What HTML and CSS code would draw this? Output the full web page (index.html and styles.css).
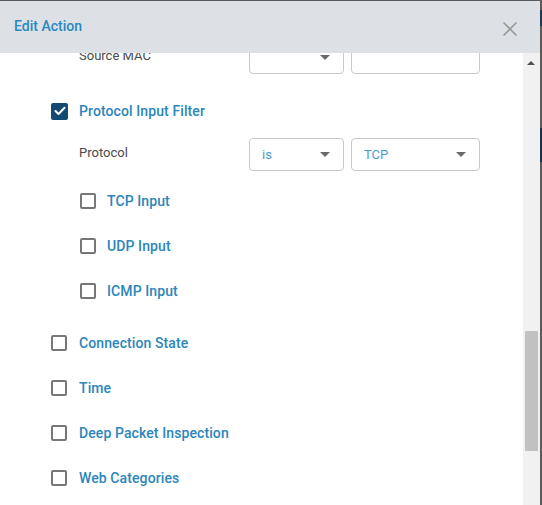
FILE: index.html
```html
<!DOCTYPE html>
<html>
<head>
<meta charset="utf-8">
<link rel="stylesheet" href="styles.css">
</head>
<body>
<div class="modal">
  <div class="modal-header">
    <span class="title">Edit Action</span>
    <svg class="close" width="16" height="16" viewBox="0 0 16 16"><path d="M1.5 1.5 L14.5 14.5 M14.5 1.5 L1.5 14.5" stroke="#9a9a9a" stroke-width="1.6" fill="none"/></svg>
  </div>
  <div class="modal-body">
    <div class="content">
      <div class="inner">
        <div class="field-row">
          <span class="field-label">Source MAC</span>
          <div class="select small"><span class="value"></span><span class="caret"></span></div>
          <div class="input wide"></div>
        </div>
        <div class="check-row first">
          <span class="box checked"><svg width="12" height="10" viewBox="0 0 12 10"><path d="M1.5 5 L4.5 8 L10.5 1.8" stroke="#fff" stroke-width="2" fill="none" stroke-linecap="round" stroke-linejoin="round"/></svg></span>
          <span class="check-label">Protocol Input Filter</span>
        </div>
        <div class="field-row proto">
          <span class="field-label">Protocol</span>
          <div class="select small"><span class="value">is</span><span class="caret"></span></div>
          <div class="select wide"><span class="value">TCP</span><span class="caret"></span></div>
        </div>
        <div class="sub-group">
          <div class="check-row"><span class="box"></span><span class="check-label">TCP Input</span></div>
          <div class="check-row"><span class="box"></span><span class="check-label">UDP Input</span></div>
          <div class="check-row"><span class="box"></span><span class="check-label">ICMP Input</span></div>
        </div>
        <div class="main-group">
          <div class="check-row"><span class="box"></span><span class="check-label">Connection State</span></div>
          <div class="check-row"><span class="box"></span><span class="check-label">Time</span></div>
          <div class="check-row"><span class="box"></span><span class="check-label">Deep Packet Inspection</span></div>
          <div class="check-row"><span class="box"></span><span class="check-label">Web Categories</span></div>
        </div>
      </div>
    </div>
    <div class="scrollbar">
      <span class="arrow-up"></span>
      <span class="thumb"></span>
    </div>
  </div>
</div>
</body>
</html>
```
FILE: styles.css
```css
html, body {
  margin: 0;
  padding: 0;
}
body {
  width: 542px;
  height: 505px;
  overflow: hidden;
  background: linear-gradient(to bottom, #5a5a5a 0px, #5a5a5a 10px, #1d3a55 10px, #1d3a55 26px, #5a5a5a 26px, #5a5a5a 128px, #17324d 128px, #17324d 162px, #5a5a5a 162px);
  font-family: Roboto, "Liberation Sans", sans-serif;
}
.modal {
  margin-top: 1px;
  width: 540px;
  height: 504px;
  background: #fff;
  display: flex;
  flex-direction: column;
}
.modal-header {
  height: 52px;
  flex: none;
  background: #dde1e5;
  display: flex;
  align-items: center;
  justify-content: space-between;
  padding: 0 22px 0 14px;
}
.title {
  color: #2a88c1;
  font-size: 14px;
  font-weight: 500;
  margin-top: -3px;
}
.close {
  display: block;
  margin-top: 4px;
}
.modal-body {
  flex: 1;
  display: flex;
  min-height: 0;
}
.content {
  flex: 1;
  overflow: hidden;
}
.inner {
  margin-top: -12px;
}
.field-row {
  display: flex;
  align-items: center;
  height: 33px;
  padding-left: 79px;
}
.field-label {
  width: 170px;
  font-size: 13px;
  color: #4a4a4a;
  margin-bottom: 4px;
}
.select, .input {
  box-sizing: border-box;
  height: 33px;
  border: 1px solid #c8c8c8;
  border-radius: 4px;
  display: flex;
  align-items: center;
  justify-content: space-between;
  padding: 0 13px 0 12px;
}
.small {
  width: 95px;
  margin-right: 7px;
}
.wide {
  width: 129px;
}
.value {
  font-size: 13px;
  color: #4a9dcc;
}
.caret {
  width: 0;
  height: 0;
  border-left: 5px solid transparent;
  border-right: 5px solid transparent;
  border-top: 5px solid #6a6a6a;
}
.field-row.proto {
  margin-top: 12px;
}
.check-row {
  display: flex;
  align-items: center;
  height: 30px;
  padding-left: 51px;
}
.check-row.first {
  margin-top: 22px;
}
.box {
  box-sizing: border-box;
  width: 16px;
  height: 16px;
  border: 2px solid #777;
  border-radius: 2px;
  margin-right: 12px;
  display: flex;
  align-items: center;
  justify-content: center;
  flex: none;
}
.box.checked {
  border: none;
  background: #134a72;
  width: 17px;
  height: 17px;
  margin-right: 11px;
}
.check-label {
  font-size: 14px;
  font-weight: 500;
  color: #2b86bb;
  letter-spacing: 0.1px;
}
.sub-group {
  margin-top: 15px;
  display: flex;
  flex-direction: column;
  gap: 15px;
}
.sub-group .check-row {
  padding-left: 80px;
}
.sub-group .box {
  margin-right: 11px;
}
.main-group {
  margin-top: 22px;
  display: flex;
  flex-direction: column;
  gap: 15px;
}
.scrollbar {
  width: 17px;
  flex: none;
  background: #f1f1f1;
  position: relative;
}
.arrow-up {
  position: absolute;
  left: 4px;
  top: 8px;
  width: 0;
  height: 0;
  border-left: 4px solid transparent;
  border-right: 4px solid transparent;
  border-bottom: 4px solid #505050;
}
.thumb {
  position: absolute;
  left: 2px;
  top: 278px;
  width: 13px;
  height: 120px;
  background: #c1c1c1;
}
```
